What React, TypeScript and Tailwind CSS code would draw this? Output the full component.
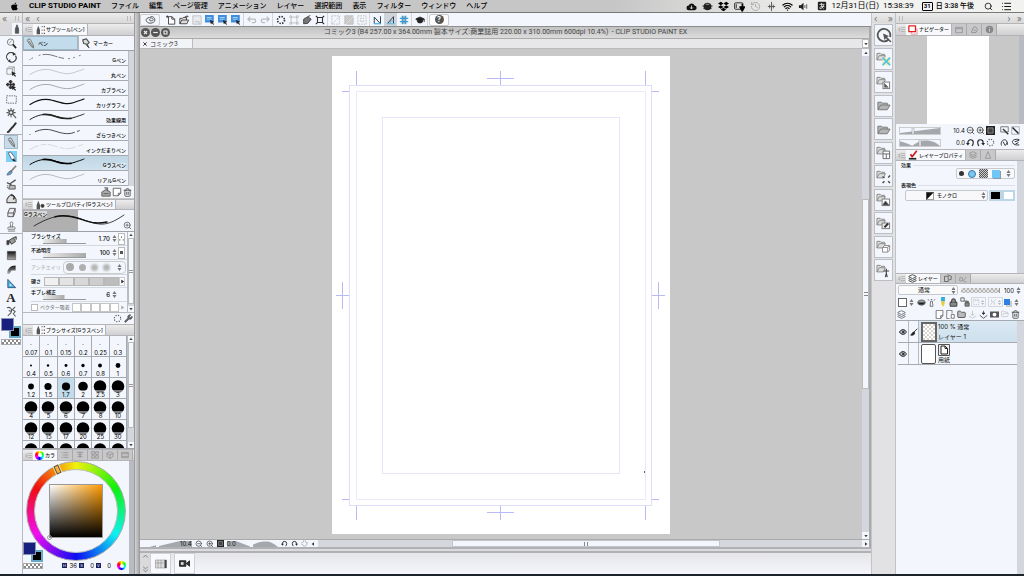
import type { ReactNode } from 'react';
import {
  Box,
  Eye,
  Folder,
  FolderOpen,
  GraduationCap,
  History,
  Layers,
  List,
  Lock,
  Move,
  Pipette,
  Search,
  Stamp,
  Trash2,
  Volume2,
  Wifi,
  Wrench,
  ZoomIn,
  ZoomOut,
} from 'lucide-react';
import { FaApple, FaDropbox } from 'react-icons/fa';

type IconProps = { children: ReactNode; className?: string };

// 12-unit grid used by all of the hand-drawn icons
function Icon({ children, className = 'size-3' }: IconProps) {
  return (
    <svg
      viewBox="0 0 12 12"
      className={`shrink-0 ${className}`}
      fill="none"
      stroke="#555"
      strokeWidth="1"
      strokeLinejoin="round"
      aria-hidden="true"
    >
      {children}
    </svg>
  );
}

const penShape = (
  <>
    <path d="M3 1.5 5.5 1 9 7.5 9.5 11 6.5 9 2.5 3Z" fill="#d5dade" stroke="#777" />
    <path d="M4 3 9 10" stroke="#666" />
  </>
);

const cursor = <path d="M6 6 11 8 9 9 11 11 10 11.8 8.2 9.8 7 11Z" fill="#222" stroke="none" />;

const undo = (
  <>
    <path d="M2.5 8V6A3.6 3.6 0 0 1 9.7 6C9.7 8 9 9.5 8 10.5" stroke="#222" strokeWidth="1.5" />
    <path d="M0 6.5h5L2.5 10Z" fill="#222" stroke="none" />
  </>
);
const redo = (
  <>
    <path d="M9.5 8V6A3.6 3.6 0 0 0 2.3 6C2.3 8 3 9.5 4 10.5" stroke="#222" strokeWidth="1.5" />
    <path d="M7 6.5h5L9.5 10Z" fill="#222" stroke="none" />
  </>
);
const dottedRing = <circle cx="6" cy="6" r="4.3" strokeDasharray="1.6 1.8" strokeWidth="1.4" />;
const fitBox = (
  <>
    <rect x="0" y="0" width="12" height="12" fill="#222" stroke="none" />
    <rect x="2.5" y="2.5" width="7" height="7" fill="#444" stroke="#bbb" strokeWidth=".8" />
  </>
);

const toolGroups: { name: string; icon: ReactNode }[][] = [
  [
    {
      name: '虫めがね',
      icon: (
        <>
          <circle cx="5" cy="4.5" r="3.5" stroke="#777" />
          <path d="M7.5 7 11 11" stroke="#222" strokeWidth="1.8" />
          <path d="M3.5 5.5 6 3" stroke="#888" />
        </>
      ),
    },
    {
      name: '回転',
      icon: (
        <>
          <path d="M2 8.5A4.5 4.5 0 0 1 8.5 2M10.3 4A4.5 4.5 0 0 1 4 10.2" stroke="#333" strokeWidth="1.2" />
          <path d="M7.5 0 11 2.5 7.5 4ZM4.5 8 1.5 9.8 5 11.8Z" fill="#333" stroke="none" />
        </>
      ),
    },
    {
      name: '操作',
      icon: (
        <>
          <path d="M1 3 3 1h6v6L7 9H1ZM1 3h6v6M7 3l2-2" stroke="#999" />
          {cursor}
        </>
      ),
    },
    {
      name: 'レイヤー移動',
      icon: (
        <>
          <Move x="0" y="0" width="10" height="10" strokeWidth={4} color="#333" />
          {cursor}
        </>
      ),
    },
    { name: '選択範囲', icon: <rect x=".8" y="2" width="10.4" height="8" strokeDasharray="1.6 1" strokeWidth=".8" stroke="#444" /> },
    {
      name: '自動選択',
      icon: (
        <>
          <circle cx="5.5" cy="5" r="2.2" strokeWidth="1.6" />
          <path d="M5.5 0v2M5.5 8v2M.5 5h2M8.500 5h2M2 1.5 3.5 3M9 1.5 7.5 3M2 8.5 3.5 7M7.5 7l3.5 4" strokeWidth="1.2" />
        </>
      ),
    },
    { name: 'スポイト', icon: <path d="M10.5 1.5 7 6M7 5.500 3 10.5 2 11" stroke="#333" strokeWidth="2.2" strokeLinecap="round" /> },
  ],
  [
    { name: 'ペン', icon: penShape },
    {
      name: '鉛筆',
      icon: (
        <>
          <rect x="0" y="0" width="12" height="12" fill="#7fd0f7" stroke="none" />
          <path d="M2.5 2 5 1 9.5 7 10 11 6 9Z" fill="#fff" stroke="#567" />
          <path d="M8 8.5 10 11 7.5 10Z" fill="#222" stroke="#222" />
        </>
      ),
    },
    {
      name: '筆',
      icon: (
        <>
          <path d="M11 .8 5.5 7" stroke="#888" strokeWidth="2" />
          <path d="M6 6.5C4 6 2 8 1 11c3 0 5-1 5.5-3Z" fill="#5b9bd0" stroke="#456" strokeWidth=".7" />
        </>
      ),
    },
    {
      name: 'エアブラシ',
      icon: (
        <>
          <path d="M10.5 1 4 5.5M1 4l5 2.5" strokeWidth="1.5" />
          <path d="M4 7h6v4H3Z" fill="#bbb" />
          <path d="M1 7.5h1.5M1 9.5h1.5" />
        </>
      ),
    },
    {
      name: 'デコレーション',
      icon: (
        <>
          <path d="M1 10.5V7l2-3 3-2.5 3.5 3L11 7v3.5Z" fill="#ddd" strokeWidth="1.2" />
          <path d="M6 2c3 1 4 3 2 5" stroke="#333" strokeWidth="1.6" />
        </>
      ),
    },
    { name: '消しゴム', icon: <path d="M4 1.5h6L8 6.5H2ZM2 6.5v4h6l2-5v-4M8 6.5v4" fill="#e6e6e6" /> },
    { name: '色混ぜ', icon: <Stamp width="12" height="12" strokeWidth={2} color="#777" /> },
  ],
  [
    {
      name: '塗りつぶし',
      icon: (
        <>
          <path d="M3.5 4.500 8 2l2.5 4L6 9Z" fill="#999" stroke="#444" />
          <path d="M1 5v4.5h2L4 5Z" fill="#333" />
          <path d="M8 2 11 1v3" strokeWidth="1.5" />
        </>
      ),
    },
    { name: 'グラデーション', icon: <rect x="1.5" y="1.5" width="9" height="9" fill="url(#tone)" stroke="#444" strokeWidth=".6" /> },
    { name: '図形', icon: <path d="M1.5 10.5C1 5 5 1.5 10.5 1.5V7L6 7 4 10.5Z" fill="url(#tone)" stroke="none" /> },
    {
      name: '定規',
      icon: (
        <>
          <path d="M2 1.5V10.5H10.5Z" fill="#4ab0e8" stroke="#357" />
          <path d="M4 6v2.5h2.5Z" fill="#fff" stroke="none" />
        </>
      ),
    },
    { name: 'テキスト', icon: null },
    {
      name: '線修正',
      icon: <path d="M1 2c3-1.5 6 1 5 4S3 9 2 11M10 1 7 4l3 2-2 2.5 2.5 3M3 5l3 1" strokeWidth="1.1" />,
    },
  ],
];

const brushes = [
  { name: 'Gペン', w: 0.8, color: '#555', dash: '0 2 1 7 1 3 14 2 5 5 1 4 1 5 1 30' },
  { name: '丸ペン', w: 0.5, color: '#999' },
  { name: 'カブラペン', w: 0.7, color: '#888' },
  { name: 'カリグラフィ', w: 1.2, color: '#111' },
  { name: '効果線用', w: 1, color: '#222', bold: true },
  { name: 'ざらつきペン', w: 0.9, color: '#333', dash: '0 6 40 3 2 20' },
  { name: 'インクだまりペン', w: 0.5, color: '#bbb', dash: '9 3 5 2' },
  { name: 'Gラスペン', w: 1, color: '#000', bold: true, selected: true },
  { name: 'リアルGペン', w: 0.8, color: '#aaa' },
];

const sizes = [
  '0.07', '0.1', '0.15', '0.2', '0.25', '0.3',
  '0.4', '0.5', '0.6', '0.7', '0.8', '1',
  '1.2', '1.5', '1.7', '2', '2.5', '3',
  '4', '5', '6', '7', '8', '10',
  '12', '15', '17', '20', '25', '30',
  '40', '50', '60', '70', '80', '100',
];

function dotRadius(size: string) {
  const n = Number(size);
  if (n < 0.35) return 0.4;
  if (n >= 2.5) return 6.3;
  return n * 2.4;
}

const menus = [
  'ファイル', '編集', 'ページ管理', 'アニメーション', 'レイヤー',
  '選択範囲', '表示', 'フィルター', 'ウィンドウ', 'ヘルプ',
];

function MenuBar() {
  return (
    <header className="flex h-[13px] shrink-0 items-center border-b border-[#777] bg-linear-to-r from-[#c6c6c6] from-60% to-[#f2f2f0] to-80% pr-3 pl-[10px] font-[Roboto,'Noto_Sans_CJK_JP',sans-serif] text-[7px] leading-none font-medium text-black">
      <FaApple size={9} />
      <nav className="ml-[10px] flex items-center gap-[10px] whitespace-nowrap">
        <button type="button" className="text-[8px] font-bold">CLIP STUDIO PAINT</button>
        {menus.map((m) => (
          <button type="button" key={m}>{m}</button>
        ))}
      </nav>
      <div className="ml-auto flex items-center whitespace-nowrap">
        <div className="flex items-center gap-[5px]">
          <Icon className="size-[11px]">
            <path d="M3 10a2.5 2.5 0 0 1 0-5 3.3 3.3 0 0 1 6.3 0A2.5 2.5 0 0 1 9 10Z" fill="#111" stroke="none" />
            <path d="M6 5v3.5M4.5 7 6 8.7 7.5 7" stroke="#ddd" />
          </Icon>
          <Icon className="size-[11px]">
            <ellipse cx="6" cy="6" rx="4.2" ry="4" fill="#222" stroke="none" />
            <path d="M.5 5.5h11M1.5 8h9" stroke="#222" />
            <path d="M4 3.500h4" stroke="#aaa" />
          </Icon>
          <FaDropbox size={11} />
          <Icon className="size-[11px]">
            <rect x=".7" y="2" width="9" height="7" rx="1" stroke="#222" />
            <path d="M2.5 3.500v4" stroke="#222" />
            <path d="M9 3v8M6.5 6.5h5L9 11Z" fill="#000" stroke="#000" strokeWidth="1.5" />
          </Icon>
          <History size={11} color="#aaa" />
          <Icon className="size-[11px]">
            <path d="M6 1v10M4 4v4M8 4v4M2 6h8" stroke="#555" />
          </Icon>
          <Wifi size={11} strokeWidth={2.5} />
          <Icon className="size-[11px]">
            <path d="M1 4.500h2L6 2v8L3 7.5H1Z" fill="#222" stroke="none" />
            <path d="M7.5 4.500v3M9.5 3.500v5" stroke="#555" />
          </Icon>
        </div>
        <Icon className="ml-[8px] size-[10px]">
          <rect x="1" y="1" width="10" height="10" rx="1" fill="#222" stroke="none" />
          <path d="M3 4h6M5.5 2.5C5 6 6 8 8 9.5M8 5C7 8 5 9.5 3.5 9 2.5 7 6 5.5 9 7" stroke="#eee" />
        </Icon>
        <span className="ml-1 text-[8px] font-normal">12月31日(日)&nbsp; 15:38:39</span>
        <span className="ml-2 flex h-[9px] w-[11px] items-center justify-center rounded-[1px] border border-black text-[6px] font-bold">31</span>
        <span className="ml-[3px]">日 3:38 午後</span>
        <Search size={9} className="ml-[10px]" />
        <List size={11} className="ml-2" />
      </div>
    </header>
  );
}

function Grip() {
  return <span className="mx-px h-[5px] w-[4px] border-x border-[#bbb]" />;
}

function DockHeader({ left, right }: { left?: ReactNode; right?: ReactNode }) {
  return (
    <div className="flex h-[10px] shrink-0 items-center justify-between bg-linear-to-b from-[#ececec] to-[#d9d9d9] px-[2px] text-[9px] leading-none text-[#777]">
      <span className="flex items-center gap-[6px]">{left}</span>
      <span className="flex items-center gap-[6px]">{right}</span>
    </div>
  );
}

type TabBarProps = { icon: ReactNode; label: string; rest?: ReactNode[]; className?: string };

function TabBar({ icon, label, rest = [], className = 'h-3' }: TabBarProps) {
  return (
    <div className={`flex shrink-0 items-stretch border-y border-[#b4b4b8] bg-linear-to-b from-[#ececec] to-[#cfcfd2] ${className}`}>
      <button type="button" aria-label="パネルメニュー" className="flex w-[10px] shrink-0 items-center justify-center">
        <Icon className="size-[7px]">
          <path d="M5 2.5h7M5 6h7M5 9.500h7M3 3v6L0 6Z" stroke="#999" />
        </Icon>
      </button>
      <button type="button" className="flex shrink-0 items-center gap-px border-r border-[#b4b4b8] bg-[#f7f9fc] px-[2px] text-[5px] leading-none font-medium whitespace-nowrap text-[#222]">
        {icon}
        {label}
      </button>
      {rest.map((r, i) => (
        <button type="button" key={i} aria-label={`タブ ${i + 2}`} className="flex w-[15px] min-w-0 items-center justify-center border-r border-[#aaa] bg-[#c8c8ca]">
          {r}
        </button>
      ))}
    </div>
  );
}

function Arrow({ down }: { down?: boolean }) {
  return (
    <Icon className="size-[4px]">
      <path d={down ? 'M1 3h10L6 10Z' : 'M6 2 11 9H1Z'} fill="#444" stroke="none" />
    </Icon>
  );
}

function Scrollbar({ thumb }: { thumb: string }) {
  return (
    <div className="flex w-[7px] shrink-0 flex-col items-center border-l border-[#b9bec4] bg-[#d3d6dc]">
      <button type="button" aria-label="上へ" className="flex h-[6px] w-full items-center justify-center bg-[#f4f7fc]"><Arrow /></button>
      <div className={`flex w-full items-center justify-center border border-[#bbb] bg-[#f4f7fc] ${thumb}`}>
        <span className="h-[3px] w-1 border-y border-[#999]" />
      </div>
      <button type="button" aria-label="下へ" className="mt-auto flex h-[6px] w-full items-center justify-center bg-[#f4f7fc]"><Arrow down /></button>
    </div>
  );
}

function Swatches() {
  return (
    <div className="w-5">
      <div className="relative h-5 w-5">
        <button type="button" aria-label="サブカラー" className="absolute right-0 bottom-0 size-[12px] border-2 border-[#67a9c4] bg-black" />
        <button type="button" aria-label="メインカラー" className="absolute top-0 left-0 size-[13px] border border-[#8d93b4] bg-[#17207c]" />
      </div>
      <button
        type="button"
        aria-label="透明色"
        className="mt-px block h-[6px] w-full border border-[#aaa] bg-white bg-[conic-gradient(#888_25%,#fff_0_50%,#888_0_75%,#fff_0)] bg-[length:4px_4px]"
      />
    </div>
  );
}

function ToolBox() {
  return (
    <aside className="flex w-[23px] shrink-0 flex-col border-r border-[#b7bac0] bg-[#f3f6fc]">
      <DockHeader left="«" right={<Grip />} />
      <div className="flex h-[13px] shrink-0 border-b border-[#b7bac0] bg-[#d9d9dc]">
        <span className="w-3" />
        <span className="flex flex-1 items-center justify-center bg-[#f3f6fc]">
          <Icon className="size-[10px]"><path d="M6 1 8 6V11H4V6Z" fill="#555" /></Icon>
        </span>
      </div>
      {toolGroups.map((group, g) => (
        <div key={g} className={g < 2 ? 'border-b border-[#aeb2b8]' : ''}>
          {group.map((tool) => (
            <button
              type="button"
              key={tool.name}
              aria-label={tool.name}
              className="flex h-[14px] w-full items-center justify-center"
            >
              <span className={`flex size-[14px] items-center justify-center ${tool.name === 'ペン' ? 'border border-[#a3bccb] bg-[#c7dcea]' : ''}`}>
                {tool.icon ? (
                  <Icon className="size-[11px]">{tool.icon}</Icon>
                ) : (
                  <span className="font-['Liberation_Serif',serif] text-[13px] leading-none font-bold text-[#222]">A</span>
                )}
              </span>
            </button>
          ))}
        </div>
      ))}
      <div className="pl-px"><Swatches /></div>
    </aside>
  );
}

function Stroke({ w, color, dash, bold }: { w: number; color: string; dash?: string; bold?: boolean }) {
  return (
    <svg viewBox="0 0 56 10" className="h-[10px] w-14 shrink-0" fill="none" stroke={color} strokeLinecap="round" aria-hidden="true">
      <path d="M1 7.5C8 3 16 1 24 3.5S38 8 45 5.5 53 3 55 2" strokeWidth={w} strokeDasharray={dash} />
      {bold && <path d="M14 2.500C20 2 24 3.500 28 4.9S36 6.9 42 6.3" strokeWidth="1.700" />}
    </svg>
  );
}

const nibIcon = (
  <Icon className="size-[10px]">
    <path d="M4 1 6 6v5H2V6Z" fill="#555" stroke="none" />
    <path d="M8 2h1M8 6h1M8 10h1M10.5 2H12M10.5 6H12M10.5 10H12" strokeWidth="1.5" />
  </Icon>
);

function SubTools() {
  return (
    <section className="flex flex-col">
      <TabBar className="h-[13px]" icon={nibIcon} label="サブツール[ペン]" />
      <div className="grid h-[14px] grid-cols-2 gap-px bg-[#b5b9be] text-[5px] leading-none font-medium">
        <button type="button" className="flex items-center gap-[2px] border border-[#9fb8c8] bg-[#c3dcec] px-px">
          <Icon className="size-[11px]">{penShape}</Icon>ペン
        </button>
        <button type="button" className="flex items-center gap-[2px] bg-[#f3f7fd] px-px">
          <Icon className="size-[11px]">
            <path d="M3 2 7 1 10 5 8 7 4 6Z" fill="#ddd" strokeWidth="1.3" />
            <path d="m8 7 2 4-3-3" fill="#222" />
          </Icon>
          マーカー
        </button>
      </div>
      <div className="flex border-t border-[#9da2a8]">
        <div className="min-w-0 flex-1">
          {brushes.map((b) => (
            <button
              type="button"
              key={b.name}
              className={`flex h-[15px] w-full items-end justify-between border-b border-[#a5aab0] pr-[2px] pl-[6px] text-[5px] leading-none font-medium ${b.selected ? 'bg-linear-to-b from-[#bfd6e4] to-[#cfe2ee]' : 'bg-[#f3f7fd]'}`}
            >
              <span className="w-0 self-start pt-px">
                <Stroke w={b.w} color={b.color} dash={b.dash} bold={b.bold} />
              </span>
              <span className={`pb-[2px] whitespace-nowrap ${b.selected ? 'bg-[#dce9f2]' : ''}`}>{b.name}</span>
            </button>
          ))}
        </div>
        <div className="w-[6px] shrink-0 border-l border-[#b9bec4] bg-[#d3d6dc]" />
      </div>
      <div className="flex h-3 items-center justify-end gap-px bg-[#f3f6fc] pr-[2px]">
        <button type="button" aria-label="読み込み">
          <Icon className="size-[10px]"><path d="M1 6 6 3l5 3v5H1ZM4 1h4v4M3 8h6" fill="#aaa" /></Icon>
        </button>
        <button type="button" aria-label="複製">
          <Icon className="size-[10px]"><path d="M1.5 1.5h9v6l-3 3h-6ZM10.5 7.5h-3v3" fill="#fff" /></Icon>
        </button>
        <button type="button" aria-label="削除"><Trash2 size={9} strokeWidth={2.5} color="#555" /></button>
      </div>
    </section>
  );
}

function Spin() {
  return (
    <Icon className="ml-px size-[7px]">
      <path d="M6 0 9.5 5h-7ZM6 12 9.5 7h-7Z" fill="#777" stroke="none" />
    </Icon>
  );
}

function Property({ label, value, fill, children }: { label: string; value: string; fill: string; children?: ReactNode }) {
  return (
    <div className="flex h-[14px] items-center border-b border-[#d4d9df] pr-[2px]">
      <label className="flex w-[65px] flex-col">
        {label}
        <span className="ml-3 block">
          <input
            type="range"
            defaultValue="50"
            className={`block h-[5px] w-[43px] appearance-none border-b border-[#999] bg-[linear-gradient(to_right,#eee,#aaa)] bg-no-repeat [&::-webkit-slider-thumb]:w-0 [&::-webkit-slider-thumb]:appearance-none ${fill}`}
          />
        </span>
      </label>
      <input aria-label={`${label} 値`} defaultValue={value} className="w-[14px] bg-transparent text-right text-[6px]" />
      <Spin />
      {children}
    </div>
  );
}

function ToolProperties() {
  return (
    <section className="mt-px flex flex-col">
      <TabBar
        className="h-[11px]"
        icon={<Icon className="size-[10px]"><path d="M4 1 6 6v5H2V6Z" fill="#555" stroke="none" /><circle cx="9" cy="7" r="2" fill="#333" /></Icon>}
        label="ツールプロパティ[Gラスペン]"
      />
      <div className="relative flex h-[22px] items-center justify-center border-b border-[#9da2a8] bg-linear-to-r from-[#b0b0b0] from-50% to-[#f3f7fd] to-50%">
        <svg viewBox="0 0 92 16" className="h-4 w-[92px]" fill="none" stroke="#111" strokeLinecap="round" aria-hidden="true">
          <path d="M1 13C18 3 30 0 48 6S72 15 91 2" strokeWidth=".8" />
          <path d="M22 3.700C32 1.500 40 3.500 50 6.800S64 10.800 74 9" strokeWidth="1.400" />
        </svg>
        <span className="absolute top-px left-px bg-[#d8d8d8] text-[5px] leading-[6px] font-medium">Gラスペン</span>
        <ZoomIn size={9} className="absolute right-[2px] bottom-px" color="#555" />
      </div>
      <div className="flex h-20 overflow-hidden">
        <div className="min-w-0 flex-1 bg-[#f3f7fd] pl-2 text-[5px] leading-[6px] font-medium whitespace-nowrap">
          <Property label="ブラシサイズ" value="1.70" fill="bg-[length:55%_100%]">
            <button type="button" aria-label="ブラシサイズ影響元設定" className="ml-auto flex h-3 w-[7px] items-center justify-center border border-[#bbb] bg-white">
              <Icon className="size-[5px]"><path d="M5 1h2v3H5ZM1 8h2v3H1ZM9 8h2v3H9Z" fill="#333" stroke="none" /></Icon>
            </button>
          </Property>
          <Property label="不透明度" value="100" fill="bg-[length:100%_100%]">
            <button type="button" aria-label="不透明度影響元設定" className="ml-auto flex h-3 w-[7px] items-center justify-center border border-[#bbb] bg-white">
              <span className="size-[3px] bg-[#555]" />
            </button>
          </Property>
          <div className="flex h-[15px] items-center border-b border-[#d4d9df] pr-px text-[#b5b5b5]">
            <span className="shrink-0">アンチエイリ</span>
            <div className="ml-[2px] flex h-[13px] flex-1 items-center justify-around rounded-sm border border-[#ccc]">
              {['size-[8px] bg-[#aaa]', 'size-[7px] bg-[#b0b0b0]', 'size-[7px] bg-[#b4b4b4] blur-[1px]', 'size-[7px] bg-[#b4b4b4] blur-[1px]'].map((c, n) => (
                <button type="button" key={n} aria-label={`強さ ${n}`} className={`rounded-full ${c}`} />
              ))}
              <Spin />
            </div>
          </div>
          <div className="flex h-[13px] items-center border-b border-[#d4d9df] pr-[2px]">
            <span className="w-[13px]">硬さ</span>
            {['bg-[#f0f0f0]', 'bg-[#e3e3e3]', 'bg-[#d8d8d8]', 'bg-[#cdcdcd]', 'bg-[#bdbdbd]'].map((c) => (
              <button type="button" key={c} aria-label="硬さ" className={`h-[9px] flex-1 border border-[#b8b8b8] ${c}`} />
            ))}
            <button type="button" aria-label="硬さの詳細" className="flex h-[9px] w-[6px] items-center justify-center border border-[#ccc] bg-white">
              <Icon className="size-[5px]"><path d="M3 1 10 6 3 11Z" fill="#333" stroke="none" /></Icon>
            </button>
          </div>
          <Property label="手ブレ補正" value="6" fill="bg-[length:50%_100%]" />
          <div className="flex h-[10px] items-center gap-px pr-[2px] text-[#888]">
            <label className="flex items-center gap-[2px]">
              <input type="checkbox" className="size-[7px] appearance-none border border-[#bbb] bg-white" />
              ベクター吸着
            </label>
            <span className="ml-px grid h-[9px] flex-1 grid-cols-5">
              {[0, 1, 2, 3, 4].map((n) => <span key={n} className="border border-[#c5c5c5] bg-white" />)}
            </span>
            <Icon className="size-[5px]"><path d="M3 1 10 6 3 11Z" fill="#aaa" stroke="none" /></Icon>
          </div>
        </div>
        <Scrollbar thumb="h-[66px]" />
      </div>
      <div className="flex h-3 items-center justify-end gap-[2px] border-t border-[#b7bac0] bg-[#f3f6fc] pr-px">
        <button type="button" aria-label="初期設定に戻す"><Icon className="size-[9px]">{dottedRing}</Icon></button>
        <button type="button" aria-label="詳細"><Wrench size={9} fill="#666" color="#555" /></button>
      </div>
    </section>
  );
}

function BrushSizes() {
  return (
    <section className="flex flex-col">
      <TabBar icon={nibIcon} label="ブラシサイズ[Gラスペン]" />
      <div className="flex h-[113px] overflow-hidden border-b border-[#9da2a8]">
        <div className="grid flex-1 grid-cols-6">
          {sizes.map((s) => (
            <button
              type="button"
              key={s}
              className={`relative flex h-[21px] flex-col items-center justify-end border-r border-b border-[#a5aab0] text-[6px] leading-[7px] ${s === '1.7' ? 'bg-[#c3dcec]' : 'bg-[#f3f7fd]'}`}
            >
              <svg viewBox="0 0 16 14" className="absolute top-[2px] h-[14px] w-4" aria-hidden="true">
                <circle cx="8" cy="6.500" r={dotRadius(s)} />
                {Number(s) >= 2 && <rect x="1" y="10" width="14" height="4" fill="#f3f7fd" opacity=".5" />}
              </svg>
              <span className="relative">{s}</span>
            </button>
          ))}
        </div>
        <Scrollbar thumb="h-[86px]" />
      </div>
    </section>
  );
}

function WheelIcon({ className = 'size-[9px]' }: { className?: string }) {
  return (
    <span className={`flex shrink-0 items-center justify-center rounded-full bg-[conic-gradient(yellow,lime,cyan,blue,magenta,red,yellow)] ${className}`}>
      <span className="size-[4px] rounded-full bg-white" />
    </span>
  );
}

function ColorCircle() {
  const grey = '#888';
  return (
    <section className="flex flex-1 flex-col">
      <TabBar
        icon={<WheelIcon />}
        label="カラ"
        rest={[
          <List key="l" size={8} color={grey} />,
          <Icon key="s" className="size-2"><path d="M1 2h10M3 5h6M2 8h8M6 1v10" stroke={grey} /></Icon>,
          <Icon key="m" className="size-2"><path d="M1 1h4v4H1ZM7 1h4v4H7ZM1 7h4v4H1ZM7 7h4v4H7Z" stroke={grey} /></Icon>,
          <Box key="y" size={8} color={grey} />,
          <Icon key="f" className="size-2"><path d="M1 2h10v8H1ZM1 4h10M1 8h10" stroke={grey} /></Icon>,
        ]}
      />
      <div className="flex flex-1">
        <div className="relative flex-1 bg-[#f3f7fd] pl-[3px]">
          <div className="relative flex size-[100px] items-center justify-center rounded-full border border-[#aaa] bg-[conic-gradient(#f2f20d,#0df20d,#0df2f2,#0d0df2,#f20df2,#f20d0d,#f2f20d)]">
            <div className="flex size-[84px] items-center justify-center rounded-full border border-[#bbb] bg-[#f3f7fd]">
              <div className="size-[54px] border border-[#999] bg-[linear-gradient(to_top,#000,transparent),linear-gradient(to_right,#fff,#ff9b00)]" />
            </div>
            <span className="absolute top-[3px] left-[28px] h-[9px] w-[5px] -rotate-24 border border-[#555] bg-[#f7b23a] outline outline-white/60" />
            <span className="absolute bottom-[20px] left-[20px] size-[5px] rounded-full border border-[#999]" />
          </div>
          <div className="absolute bottom-[5px] left-0"><Swatches /></div>
          <div className="flex items-center gap-[2px] pl-[36px] text-[6px] leading-none">
            {[['H', '36'], ['S', '0'], ['V', '0']].map(([k, v]) => (
              <label key={k} className="flex items-center">
                <span className="size-[5px] bg-[#1b1f5e] text-center text-[4px] leading-[5px] text-white">{k}</span>
                <input aria-label={k} defaultValue={v} className="w-[10px] bg-transparent text-right" />
              </label>
            ))}
            <WheelIcon className="ml-1 size-[9px]" />
          </div>
        </div>
        <div className="w-[5px] bg-[#b8bcc2]" />
      </div>
    </section>
  );
}

function LeftPanels() {
  return (
    <div className="flex w-[111px] shrink-0 flex-col text-black">
      <DockHeader left={<><span>«</span><span>‹</span></>} right={<Grip />} />
      <SubTools />
      <ToolProperties />
      <BrushSizes />
      <ColorCircle />
    </div>
  );
}

const light = '#bbb';

function saveAs(name: string) {
  return {
    name,
    icon: (
      <>
        <rect x="0" y="0" width="10.5" height="9" fill="#3f8ddb" stroke="none" />
        <path d="M2 3h6M2 5h6" stroke="#b8dcfa" />
        {cursor}
      </>
    ),
  };
}

const commandGroups: { name: string; icon: ReactNode; on?: boolean }[][] = [
  [
    { name: '新規', icon: <path d="M3 2h4l3.5 3v6H3ZM7 2v3h3.5M0 2h3M1.5.5v3" fill="#fff" stroke="#333" /> },
    { name: '開く', icon: <path d="M1 10.5V4h3l1-1h4v3M1 10.5 3.5 6H11.5L9.5 10.5ZM7 2h4L9.5.5" fill="#ddd" stroke="#333" /> },
    { name: '保存', icon: <path d="M1 1h10v10H1ZM3.5 8h5v3" fill="#e8eaee" stroke={light} /> },
    saveAs('jpg'),
    saveAs('png'),
    saveAs('psd'),
  ],
  [
    { name: '取り消し', icon: <path d="M1 5h7.5a2 2 0 0 1 0 4H6M4 2 1 5l3 3" stroke={light} strokeWidth="1.5" /> },
    { name: 'やり直し', icon: <path d="M11 5H3.5a2 2 0 0 0 0 4H6M8 2l3 3-3 3" stroke={light} strokeWidth="1.5" /> },
  ],
  [
    { name: '消去', icon: <circle cx="6" cy="6" r="4.2" strokeDasharray="1.8 1.5" strokeWidth="2" stroke="#333" /> },
    { name: '選択範囲外を消去', icon: <path d="M2.5 2.5h7v7h-7ZM1 1h2v2H1ZM9 1h2v2H9ZM1 9h2v2H1ZM9 9h2v2H9Z" stroke={light} /> },
    { name: '塗りつぶし', icon: <path d="M2 5 7 2l4 3-4 5-5 .5ZM7 2l3-1.5" fill="#777" stroke="#333" /> },
    { name: '拡大・縮小・回転', icon: <path d="M3 3h6v6H3ZM1 1l2 2M11 1 9 3M1 11l2-2M11 11 9 9" stroke="#333" strokeWidth="1.3" /> },
  ],
  [
    { name: '選択を解除', icon: <path d="M1 1h9v10H1ZM1 11 11 1" stroke={light} strokeDasharray="2 1" /> },
    { name: '選択範囲を反転', icon: <path d="M1 11V1h10ZM11 3v8H3Z" fill="#ccc" stroke={light} /> },
    { name: '選択範囲の境界線', icon: <path d="M1 1h10v10H1ZM4 4h4v4H4Z" stroke={light} strokeDasharray="2 1" /> },
  ],
  [
    { name: '定規にスナップ', icon: <><path d="M1.5 10.5v-8L9 10.5V1.5" stroke="#345" strokeWidth="1.2" /><path d="M1.5 10.5h8" stroke="#47b3e6" strokeWidth="1.5" /></> },
    { name: '特殊定規にスナップ', icon: <><path d="M2 10 9 2v8" stroke="#345" strokeWidth="1.2" /><path d="M1 10.5h10M5 10c0-3 2-3 4-3" stroke="#47b3e6" /></>, on: true },
    { name: 'グリッドにスナップ', icon: <><path d="M4 1v10M8 1v10M1 4h10M1 8h10" stroke="#35a4dd" strokeWidth="1.6" /><path d="M6 1v10" /></> },
  ],
  [{ name: 'サポート', icon: <GraduationCap width="12" height="12" fill="#222" color="#222" strokeWidth={2} /> }],
];

function CommandBar() {
  return (
    <div className="flex h-[14px] shrink-0 items-center border-b border-[#8d8d8d] bg-[#f3f6fc]">
      <button type="button" aria-label="CLIP STUDIO" className="mr-1 flex h-3 w-5 items-center justify-center rounded-xs border border-[#ccc]">
        <Icon className="h-[10px] w-[13px]">
          <path d="M6 2C9 1 12 4 11 7S4 11 1.5 8 3 2 7 3.500s2 4-.5 3.500S4 5 6 5" stroke="#555" strokeWidth="1.2" />
        </Icon>
      </button>
      {commandGroups.map((group, i) => (
        <div key={i} className="mr-px flex border-r border-[#d3d6dc] pr-px">
          {group.map((c) => (
            <button
              type="button"
              key={c.name}
              aria-label={c.name}
              className={`flex h-[13px] w-[13px] items-center justify-center ${c.on ? 'bg-[#cfd3da]' : ''}`}
            >
              <Icon className="size-[10px]">{c.icon}</Icon>
            </button>
          ))}
        </div>
      ))}
      <button type="button" aria-label="ヘルプ" className="flex h-3 w-5 items-center justify-center rounded-xs border border-[#ccc] bg-white">
        <span className="size-[9px] rounded-full bg-[#555] text-center text-[7px] leading-[9px] font-bold text-white">?</span>
      </button>
    </div>
  );
}

// Manga paper with bleed, trim and inner frames plus crop marks
function Paper() {
  return (
    <svg viewBox="0 0 338 478" className="h-[478px] w-[338px] shrink-0 bg-white" fill="none" stroke="#dedefc" shapeRendering="crispEdges" role="img" aria-label="コミック3">
      <rect x="17.5" y="29.5" width="302" height="420" />
      <rect x="24.5" y="35.5" width="289" height="408" stroke="#ebe9fb" />
      <rect x="50.5" y="61.5" width="237" height="356" stroke="#e6e6fb" />
      <g stroke="#b9b9f6">
        <path d="M155 22.5h27M168.500 15v14M155 456.500h27M168.500 450v14" />
        <path d="M4 239.500h13M10.500 226v27M320 239.500h13M326.500 226v27" />
        <path d="M24.5 15v14M313.500 15v14M24.5 450v14M313.500 450v14" />
        <path d="M10 35.500h7M320 35.500h7M10 443.500h7M320 443.500h7" />
      </g>
      <path d="M312.500 415v2" stroke="#666" />
    </svg>
  );
}

function Ramp({ d, className, children }: { d: string; className: string; children?: ReactNode }) {
  return (
    <svg viewBox="0 0 40 10" preserveAspectRatio="none" className={`shrink-0 bg-[#f3f6fc] ${className}`} aria-hidden="true">
      <path d={d} fill="#a4a8ac" />
      {children}
    </svg>
  );
}

const rise = 'M0 8.5 40 0V10H0Z';
const bump = 'M12 10C20 1 22 1 26 1S34 2 40 10Z';

function StatusBar() {
  return (
    <div className="flex h-2 shrink-0 items-center border-t border-[#aaa] bg-[#d5d7dc] text-[6px] leading-none">
      <div className="flex h-full w-[178px] shrink-0 items-center gap-[3px] bg-[#f3f6fc]">
        <Ramp d="M24 10 40 7V10Z" className="h-[6px] w-4" />
        <div className="flex items-center">
          <Ramp d={rise} className="h-[6px] w-[21px]" />
          <span className="bg-[#a4a8ac]">10.4</span>
        </div>
        <button type="button" aria-label="縮小"><ZoomOut size={8} color="#333" /></button>
        <button type="button" aria-label="拡大"><ZoomIn size={8} color="#333" /></button>
        <button type="button" aria-label="全体表示"><Icon className="size-[7px]">{fitBox}</Icon></button>
        <div className="flex items-center">
          <span className="bg-[#a4a8ac]">0.0</span>
          <Ramp d="M0 0 40 9V10H0Z" className="h-[6px] w-[14px]" />
        </div>
        <Ramp d="M0 10V6C12 1 14 1 20 1S28 1 40 10Z" className="h-[6px] w-[25px]" />
        <button type="button" aria-label="左回転"><Icon className="size-[7px]">{undo}</Icon></button>
        <button type="button" aria-label="右回転"><Icon className="size-[7px]">{redo}</Icon></button>
        <button type="button" aria-label="回転をリセット"><Icon className="size-[7px]">{dottedRing}</Icon></button>
        <button type="button" aria-label="左へ">
          <Icon className="size-[4px]"><path d="M9 1 2 6 9 11Z" fill="#333" stroke="none" /></Icon>
        </button>
      </div>
      <div className="flex h-full flex-1 justify-center pr-2">
        <span className="flex h-full w-1/2 items-center justify-center border border-[#c2c5ca] bg-[#f3f6fc]">
          <span className="h-1 w-[4px] border-x border-[#888]" />
        </span>
      </div>
      <button type="button" aria-label="右へ" className="flex h-full w-[7px] items-center justify-center bg-[#f3f6fc]">
        <Icon className="size-[4px]"><path d="M3 1 10 6 3 11Z" fill="#333" stroke="none" /></Icon>
      </button>
    </div>
  );
}

const windowButtons = [
  { name: '閉じる', d: 'm4 4 4 4M8 4 4 8' },
  { name: 'しまう', d: 'M3 6h6' },
  { name: '拡大', d: 'M4 4h4v4H4Z' },
];

function Workspace() {
  return (
    <main className="flex min-w-0 flex-1 flex-col">
      <CommandBar />
      <div className="flex min-h-0 flex-1 flex-col border-r-2 border-[#aaa]">
        <div className="flex h-3 shrink-0 items-center border-b border-[#aaa] bg-linear-to-b from-[#c2c2c2] to-[#dcdcdc] pl-px">
          <div className="flex gap-px">
            {windowButtons.map((b) => (
              <button type="button" key={b.name} aria-label={b.name}>
                <Icon className="size-[9px]">
                  <circle cx="6" cy="6" r="6" fill="#555" stroke="none" />
                  <path d={b.d} stroke="#eee" strokeWidth="1.5" />
                </Icon>
              </button>
            ))}
          </div>
          <h1 className="flex-1 pr-7 text-center font-[Roboto,'Noto_Sans_CJK_JP',sans-serif] text-[7px] leading-none whitespace-pre text-[#444]">
            コミック3 (B4 257.00 x 364.00mm 製本サイズ:商業誌用 220.00 x 310.00mm 600dpi 10.4%)  - CLIP STUDIO PAINT EX
          </h1>
        </div>
        <div className="flex h-[10px] shrink-0 border-b border-[#bbb] bg-[#e7e7e9] text-[6px] leading-none text-[#333]">
          <button type="button" className="flex w-[53px] items-center gap-[3px] border-r border-[#bbb] bg-[#f3f4f8] pl-[3px]">
            <Icon className="size-1"><path d="m1 1 10 10M11 1 1 11" stroke="#444" strokeWidth="3" /></Icon>
            コミック3
          </button>
          <button type="button" aria-label="タブ一覧" className="ml-auto flex w-[7px] items-center justify-center border border-[#bbb] bg-white"><Arrow down /></button>
        </div>
        <div className="flex min-h-0 flex-1">
          <div className="flex min-w-0 flex-1 items-center justify-center overflow-hidden bg-[#c8c8c8] pt-[2px]">
            <Paper />
          </div>
          <div className="flex w-[7px] shrink-0 flex-col items-center bg-[#d3d6dc]">
            <button type="button" aria-label="上へ" className="flex h-[7px] w-full items-center justify-center bg-[#f3f6fc]"><Arrow /></button>
            <div className="flex w-full flex-1 items-center">
              <span className="flex h-2/5 w-full items-center justify-center border border-[#bbb] bg-[#f3f6fc]">
                <span className="h-1 w-1 border-y border-[#888]" />
              </span>
            </div>
            <button type="button" aria-label="下へ" className="flex h-[7px] w-full items-center justify-center bg-[#f3f6fc]"><Arrow down /></button>
          </div>
        </div>
        <StatusBar />
      </div>
      <div className="h-[6px] shrink-0 border-y-2 border-[#b0b1b5] bg-[#dcdcde]" />
      <footer className="flex h-[21px] shrink-0 bg-linear-to-b from-[#e6e6e8] to-[#f4f6fc]">
        <div className="flex w-[10px] flex-col items-center justify-between bg-[#dadadd] py-px">
          <Icon className="size-[7px]"><path d="m2 6 4-4 4 4" stroke="#777" strokeWidth="1.5" /></Icon>
          <Icon className="size-[7px]"><path d="m2 1 4 4 4-4M2 6l4 4 4-4" stroke="#777" strokeWidth="1.5" /></Icon>
        </div>
        <button type="button" aria-label="タイムライン" className="flex w-[21px] items-center justify-center border border-[#d0d2d8] bg-[#f7f9fd]">
          <Icon className="size-3"><path d="M.5 2h11v8H.5ZM3 2v8M6 2v8M.5 5h8.500" fill="#ddd" stroke="#999" strokeWidth=".7" /><path d="M9.5 2h2v8h-2Z" fill="#444" stroke="none" /></Icon>
        </button>
        <button type="button" aria-label="アニメーションセル" className="ml-[3px] flex w-[21px] items-center justify-center border border-[#d0d2d8] bg-[#f7f9fd]">
          <Icon className="size-[11px]"><path d="M.5 3h7v6h-7ZM8 6l3.5-3v6Z" fill="#333" stroke="#222" /><path d="M2 4.500h3v3H2Z" fill="#ddd" stroke="none" /></Icon>
        </button>
      </footer>
    </main>
  );
}

const materials: { name: string; mark: ReactNode; open?: boolean }[] = [
  { name: 'カラーパターン', mark: <><rect x="7" y="7" width="8" height="8" fill="#f5f0b0" stroke="none" /><path d="m7 7 8 8M15 7l-8 8" stroke="#58c4e2" strokeWidth="2" /></> },
  { name: '単色パターン', mark: <><rect x="7.5" y="7.5" width="7" height="7" fill="#fff" /><path d="M9 13V9l4 4Z" fill="#555" /></> },
  { name: '素材', mark: null, open: true },
  { name: 'ダウンロード', mark: null, open: true },
  { name: 'コマ割り', mark: <path d="M7.5 6.5h7v8h-7ZM7.5 9.5h7M11 9.5v5" fill="#fff" stroke="#666" /> },
  { name: '効果線', mark: <path d="m7 8 2 1.5M15 7l-2 2M7 15l2-2M15 15l-2-2" stroke="#444" strokeWidth="1.4" /> },
  { name: '画像素材', mark: <><rect x="6.5" y="7.500" width="8" height="7" fill="#fff" /><path d="m7 14 3-4.500 4 4.500Z" fill="#333" /></> },
  { name: 'ブラシ', mark: <><rect x="6.5" y="7.500" width="8" height="6" fill="#eee" /><path d="m9 12 4-4" stroke="#333" strokeWidth="2" /></> },
  { name: '3D', mark: <path d="m7 9 2-2h5.500v5l-2 2H7ZM7 9h5.500l2-2M12.500 9v5" fill="#fff" stroke="#888" /> },
  { name: 'ポーズ', mark: <path d="M11 6v5M8 8.500h6M11 11l-1 4M11 11l1 4" stroke="#444" strokeWidth="1.200" /> },
];

function MaterialDock() {
  return (
    <aside className="flex w-6 shrink-0 flex-col border-l border-[#c4c4c6] bg-[#e2e2e4]">
      <DockHeader left="‹" right="»" />
      <div className="mx-auto mt-px flex h-[257px] w-[19px] flex-col justify-between">
        <button type="button" aria-label="クイックアクセス" className="flex h-[22px] items-center justify-center border border-[#bcc0c6] bg-[#f3f6fc]">
          <svg viewBox="0 0 16 16" className="size-4" fill="none" stroke="#555" strokeWidth="1.8" aria-hidden="true">
            <path d="M12.500 12.500A6.300 6.300 0 1 1 14 10" />
            <path d="M7 6.500 13 9 11 10 15.500 14.500 14.500 15.500 10 11.200 8.500 13Z" fill="#555" stroke="none" />
          </svg>
        </button>
        {materials.map((m) => (
          <button type="button" key={m.name} aria-label={m.name} className="flex h-[22px] items-center justify-center border border-[#bcc0c6] bg-[#f3f6fc]">
            <svg viewBox="0 0 16 16" className="size-[15px]" fill="none" stroke="#777" aria-hidden="true">
              {m.open ? (
                <path d="M2 12V4.500h4l1 1h5v2M2 12.500 5 7.500h10l-3 5Z" fill="#b5b5b5" />
              ) : (
                <path d="M1 9.500V2.500h3.500l1 1H9V5M1 9.500 3.500 5H10L8 9.500Z" fill="#ddd" stroke="#888" />
              )}
              {m.mark}
            </svg>
          </button>
        ))}
      </div>
    </aside>
  );
}

function Navigator() {
  const grey = '#888';
  return (
    <section>
      <TabBar
        className="h-[13px]"
        icon={<Icon className="size-[10px]"><path d="M4 5h7v6H4Z" stroke="#e88" /><path d="M1 1h8v7H1Z" fill="#fff" stroke="#e02020" strokeWidth="1.5" /></Icon>}
        label="ナビゲーター"
        rest={[
          <Icon key="a" className="size-2"><path d="M1 2h10v8H1ZM1 4h10" stroke={grey} /></Icon>,
          <Icon key="b" className="size-[9px]"><path d="M2 10 4 4l3-2 3 4-2 4ZM5 7h3" stroke={grey} /></Icon>,
          <Icon key="c" className="size-[9px]"><circle cx="6" cy="6" r="5" fill={grey} stroke="none" /><path d="M6 5v4M6 3v1" stroke="#ddd" /></Icon>,
        ]}
      />
      <div className="flex h-[88px] bg-[#c8c8c8]">
        <div className="flex flex-1 justify-center"><div className="w-[62px] bg-white" /></div>
        <div className="w-[5px] bg-[#b8bcc2]" />
      </div>
      <div className="flex flex-col gap-px bg-[#f3f6fc] py-px pr-1 pl-[3px] text-[6px]">
        {[
          { value: '10.4', d: rise, thumb: 12 },
          { value: '0.0', d: bump, thumb: 19 },
        ].map((row, i) => (
          <div key={row.value} className="flex h-[11px] items-center leading-none">
            <Ramp d={row.d} className="h-2 w-[42px] border border-[#ccc]">
              {i === 1 && <path d="M0 2C8 5 10 9 14 10H0Z" fill="#a4a8ac" />}
              <rect x={row.thumb} y="0" width="2" height="10" fill="#eee" stroke="#999" strokeWidth=".5" />
            </Ramp>
            <input aria-label={i ? '回転角度' : '表示倍率'} defaultValue={row.value} className="ml-auto w-5 bg-transparent text-right" />
            <div className="ml-px flex items-center gap-px">
              {i === 0 ? (
                <>
                  <button type="button" aria-label="縮小"><ZoomOut size={9} color="#333" /></button>
                  <button type="button" aria-label="拡大"><ZoomIn size={9} color="#333" /></button>
                  <button type="button" aria-label="全体"><Icon className="size-[9px]">{fitBox}</Icon></button>
                  <button type="button" aria-label="フィット" className="ml-1"><Icon className="size-[9px]"><path d="M1 1h10v7H1Z" /><path d="m4 4 7 7" stroke="#333" strokeWidth="1.8" /></Icon></button>
                  <button type="button" aria-label="等倍" className="ml-px"><Icon className="size-[9px]"><path d="M1 1h10v10H1Z" stroke="#999" /><path d="m2 2 8 8" stroke="#222" strokeWidth="1.8" /></Icon></button>
                </>
              ) : (
                <>
                  <button type="button" aria-label="左回転"><Icon className="size-[9px]">{undo}</Icon></button>
                  <button type="button" aria-label="右回転"><Icon className="size-[9px]">{redo}</Icon></button>
                  <button type="button" aria-label="リセット"><Icon className="size-[9px]">{dottedRing}</Icon></button>
                  <button type="button" aria-label="左右反転" className="ml-1"><Icon className="size-[9px]"><path d="M2 10C0 4 6 0 9 4l1 5M4 5l3 5 3-4" stroke="#333" strokeWidth="1.3" /></Icon></button>
                  <button type="button" aria-label="上下反転" className="ml-px"><Icon className="size-[9px]"><path d="M11 2C5 1 1 3 2 6s6 4 9 3M5 5l6-2M6 8l4-2" stroke="#333" strokeWidth="1.3" /></Icon></button>
                </>
              )}
            </div>
          </div>
        ))}
      </div>
    </section>
  );
}

function LayerProperty() {
  return (
    <section>
      <TabBar
        icon={<Icon className="size-[10px]"><path d="m3 5 2 3L10.5 1" stroke="#d01818" strokeWidth="2" /><path d="M1 10.500h9" strokeWidth="2" stroke="#222" /></Icon>}
        label="レイヤープロパティ"
        rest={[
          <Layers key="l" size={8} color="#888" />,
          <Icon key="a" className="size-2"><path d="M2 11 6 1l4 10Z" stroke="#888" /></Icon>,
        ]}
      />
      <div className="flex h-[112px] bg-[#f3f7fd] text-[5px] leading-none font-medium">
        <div className="flex-1 pt-[2px] pr-[2px] pl-[5px]">
          <div className="flex items-center gap-[2px]">効果<span className="h-px flex-1 bg-[#dde1e7]" /></div>
          <div className="ml-auto flex h-[11px] w-[59px] items-center justify-around rounded-xs border border-[#c5c8ce] bg-[#f8f8fa]">
            <button type="button" aria-label="境界効果" className="size-[5px] rounded-full bg-[#333]" />
            <button type="button" aria-label="抽出線" className="size-[8px] rounded-full border border-[#357aa8] bg-[#7cc5ef]" />
            <button type="button" aria-label="トーン" className="size-[9px] bg-[conic-gradient(#555_25%,#ccc_0_50%,#555_0_75%,#ccc_0)] bg-[length:2px_2px]" />
            <button type="button" aria-label="レイヤーカラー" className="size-[8px] bg-[#6fc6f7] shadow-[1px_1px_0_#89a]" />
            <Spin />
          </div>
          <div className="mt-1 flex items-center gap-[2px]">表現色<span className="h-px flex-1 bg-[#dde1e7]" /></div>
          <div className="mt-[2px] flex h-[11px] items-stretch pl-1">
            <label className="flex flex-1 items-center rounded-xs border border-[#c5c8ce] bg-[#f8f8fa] pl-5">
              <Icon className="size-[8px]"><path d="M.5.5h11v11H.5Z" fill="#fff" /><path d="M.5 11.500V.5h11Z" fill="#111" /></Icon>
              <select aria-label="表現色" className="ml-[3px] w-[34px] flex-1 appearance-none bg-transparent text-[5px]">
                <option>モノクロ</option>
                <option>グレー</option>
                <option>カラー</option>
              </select>
              <Spin />
            </label>
            <button type="button" aria-label="黒" className="ml-px w-[13px] border-2 border-[#bcd6e5] bg-black" />
            <button type="button" aria-label="白" className="w-[13px] border-2 border-[#bcd6e5] bg-white" />
          </div>
        </div>
        <div className="w-[7px] bg-[#d3d6dc]" />
      </div>
    </section>
  );
}

const maskButtons: ReactNode[] = [
  <path d="M2 2h8v8H2ZM4 4h6" stroke="#bbb" strokeDasharray="2 1" />,
  <path d="M2 10 10 2M4 2v4M8 6v4" stroke="#bbb" />,
];

function LayerPanel() {
  return (
    <section className="flex flex-1 flex-col bg-[#f3f7fd]">
      <TabBar
        className="h-[11px]"
        icon={<Layers size={9} color="#444" strokeWidth={2.5} />}
        label="レイヤー"
        rest={[
          <Icon key="h" className="size-[9px]"><path d="M2 3h5v7H2ZM6 1l5 2v4L8 8" /></Icon>,
          <Icon key="t" className="size-2"><path d="M1 4h4v5H1ZM6 9l5-6M7 10h4" stroke="#888" /></Icon>,
        ]}
      />
      <div className="flex h-3 items-center px-[2px] text-[6px] leading-none">
        <label className="flex h-[10px] w-[62px] items-center rounded-xs border border-[#c5c8ce] bg-[#fafafb]">
          <select aria-label="合成モード" className="w-full flex-1 appearance-none bg-transparent text-center text-[6px]">
            <option>通常</option>
            <option>乗算</option>
            <option>スクリーン</option>
          </select>
          <Spin />
        </label>
        <input
          type="range"
          aria-label="不透明度"
          defaultValue="100"
          className="ml-[3px] h-[5px] w-[39px] appearance-none border-r border-[#999] bg-[conic-gradient(#b5b5b5_25%,#e4e4e4_0_50%,#b5b5b5_0_75%,#e4e4e4_0)] bg-[length:4px_4px] [&::-webkit-slider-thumb]:w-0 [&::-webkit-slider-thumb]:appearance-none"
        />
        <input aria-label="不透明度 値" defaultValue="100" className="ml-auto w-[14px] bg-transparent text-right" />
        <Spin />
      </div>
      <div className="flex h-3 items-center justify-between pr-1 pl-[2px]">
        <button type="button" aria-label="パレットカラー" className="flex items-center">
          <span className="size-[9px] border border-[#666] bg-white" />
          <Spin />
        </button>
        <button type="button" aria-label="クリッピング"><Icon className="size-[9px]"><ellipse cx="6" cy="6" rx="5" ry="3.5" fill="#999" /><path d="M1 6c2 4 8 4 10 0" fill="#222" /></Icon></button>
        <button type="button" aria-label="参照レイヤー"><Icon className="size-[9px]"><path d="M4 11 5 4h2l1 7ZM5 2h2M1 2l2 1M11 2 9 3" /></Icon></button>
        <button type="button" aria-label="下描き"><Icon className="size-[10px]"><path d="M4 0h4v5H4Z" fill="#2bb3d8" stroke="#28a" strokeWidth=".5" /><path d="M4 5h4v3L6 12 4 8Z" fill="#e8cf3a" stroke="none" /></Icon></button>
        <button type="button" aria-label="ロック"><Lock size={9} strokeWidth={2.8} fill="#888" color="#444" /></button>
        <button type="button" aria-label="透明ピクセルをロック"><Icon className="size-[10px]"><path d="M1 1h4v4H1ZM5 5h3" /><path d="M6 7h5v4H6ZM7 7V5h3v2" fill="#888" /></Icon></button>
        {maskButtons.map((m, i) => (
          <button type="button" key={i} aria-label={i ? '定規の表示範囲' : 'マスク'} className="flex h-[10px] items-center border border-[#d5d8dd]">
            <Icon className="size-[8px]">{m}</Icon>
            <Icon className="size-[5px]"><path d="M6 0 10 5H2ZM6 12l4-5H2Z" fill="#bbb" stroke="none" /></Icon>
          </button>
        ))}
        <button type="button" aria-label="レイヤーカラー" className="flex items-center gap-[2px]"><span className="size-[6px] bg-[#2f80e6] shadow-[2px_2px_0_#ccc]" /><Spin /></button>
      </div>
      <div className="flex h-[13px] items-center gap-[2px] border-b border-[#a5aab0] pr-1 pl-px">
        <Layers size={9} color="#555" />
        <button type="button" aria-label="新規ラスターレイヤー" className="ml-auto"><Icon className="size-[9px]"><path d="M1.5.5h9v7l-3 4h-6ZM10.5 7.5h-3v4" fill="#fff" /></Icon></button>
        <button type="button" aria-label="新規ベクターレイヤー"><Icon className="size-[9px]"><path d="M1 .5h7v4M1 .5v11h4M7 6h4v5H7Z" fill="#fff" /></Icon></button>
        <button type="button" aria-label="新規フォルダー"><Folder size={9} color="#555" fill="#bbb" strokeWidth={2.5} /></button>
        <button type="button" aria-label="下のレイヤーに転写"><Icon className="size-[9px]"><path d="M6 1v6M3.5 5 6 7.500 8.500 5M1 8l5 3 5-3" stroke="#bbb" /></Icon></button>
        <button type="button" aria-label="下のレイヤーに結合"><Icon className="size-[9px]"><path d="M6 1v5M4 4l2 2 2-2Z" fill="#333" stroke="#333" /><path d="m1 7 5 4 5-4" stroke="#333" /></Icon></button>
        <button type="button" aria-label="マスクを作成"><Icon className="size-[9px]"><path d="M0 2h12v8H0Z" fill="#555" stroke="none" /><circle cx="6" cy="6" r="2.5" fill="#fff" stroke="none" /></Icon></button>
        <button type="button" aria-label="マスクを適用"><FolderOpen size={8} color="#bbb" /></button>
        <button type="button" aria-label="レイヤーを削除"><Trash2 size={9} color="#555" strokeWidth={2.5} /></button>
      </div>
      <div className="flex flex-1 pl-[2px]">
        <ul className="flex-1 text-[6px]">
          <li className="flex h-[22px] items-stretch border-b border-[#a5aab0]">
            <button type="button" aria-label="レイヤー 1 を表示" className="flex w-[11px] items-center justify-center border-r border-[#b7bac0]"><Eye size={8} strokeWidth={3} /></button>
            <span className="flex w-[10px] items-center justify-center border-r border-[#b7bac0]">
              <Icon className="size-[8px]"><path d="M11 1 6 6M6 6C3 6 4 9 1 10.500c4 1 6-1 6-3Z" fill="#222" stroke="#222" strokeWidth="1.3" /></Icon>
            </span>
            <span className="flex flex-1 items-center gap-px bg-linear-to-b from-[#dbe9f4] to-[#cde0ec] pl-[2px]">
              <span className="h-5 w-4 shrink-0 border-2 border-[#666] bg-[conic-gradient(#d8d4d0_25%,#fff_0_50%,#d8d4d0_0_75%,#fff_0)] bg-[length:4px_4px]" />
              <span className="flex flex-col gap-[3px] leading-[7px] whitespace-nowrap"><span>100 % 通常</span><span>レイヤー 1</span></span>
            </span>
          </li>
          <li className="flex h-[22px] items-stretch border-b border-[#a5aab0]">
            <button type="button" aria-label="用紙を表示" className="flex w-[11px] items-center justify-center border-r border-[#b7bac0]"><Eye size={8} strokeWidth={3} /></button>
            <span className="w-[10px] border-r border-[#b7bac0]" />
            <span className="flex flex-1 items-center gap-[2px] pl-[2px]">
              <span className="h-5 w-[15px] shrink-0 rounded-xs border border-[#555] bg-white" />
              <span className="flex flex-col leading-[7px]">
                <Icon className="size-3"><path d="M.5.5h11v11H.5Z" fill="#eee" /><path d="M3 2h4l2.5 2.5V10H3ZM7 2v2.5h2.5" fill="#fff" stroke="#222" /></Icon>
                用紙
              </span>
            </span>
          </li>
        </ul>
        <div className="w-[7px] bg-[#d3d6dc]" />
      </div>
    </section>
  );
}

export default function App() {
  return (
    <div className="flex h-screen flex-col overflow-hidden bg-[#c8c8c8] font-[Inter,'Noto_Sans_CJK_JP',sans-serif] text-[#111]">
      <svg className="absolute size-0" aria-hidden="true">
        <linearGradient id="tone" x2="0" y2="1">
          <stop stopColor="#111" />
          <stop offset="1" stopColor="#aaa" />
        </linearGradient>
      </svg>
      <MenuBar />
      <div className="flex min-h-0 flex-1">
        <ToolBox />
        <LeftPanels />
        <div className="w-[6px] shrink-0 border-x border-[#9c9c9e] bg-linear-to-r from-[#d4d4d6] to-[#a8a8aa]" />
        <Workspace />
        <MaterialDock />
        <aside className="flex w-[129px] shrink-0 flex-col border-l border-[#bfc2c6]">
          <DockHeader left={<Grip />} right={<><span>›</span><span>»</span></>} />
          <Navigator />
          <LayerProperty />
          <LayerPanel />
        </aside>
      </div>
      <div className="h-[2px] shrink-0 bg-[#1d232b]" />
    </div>
  );
}
